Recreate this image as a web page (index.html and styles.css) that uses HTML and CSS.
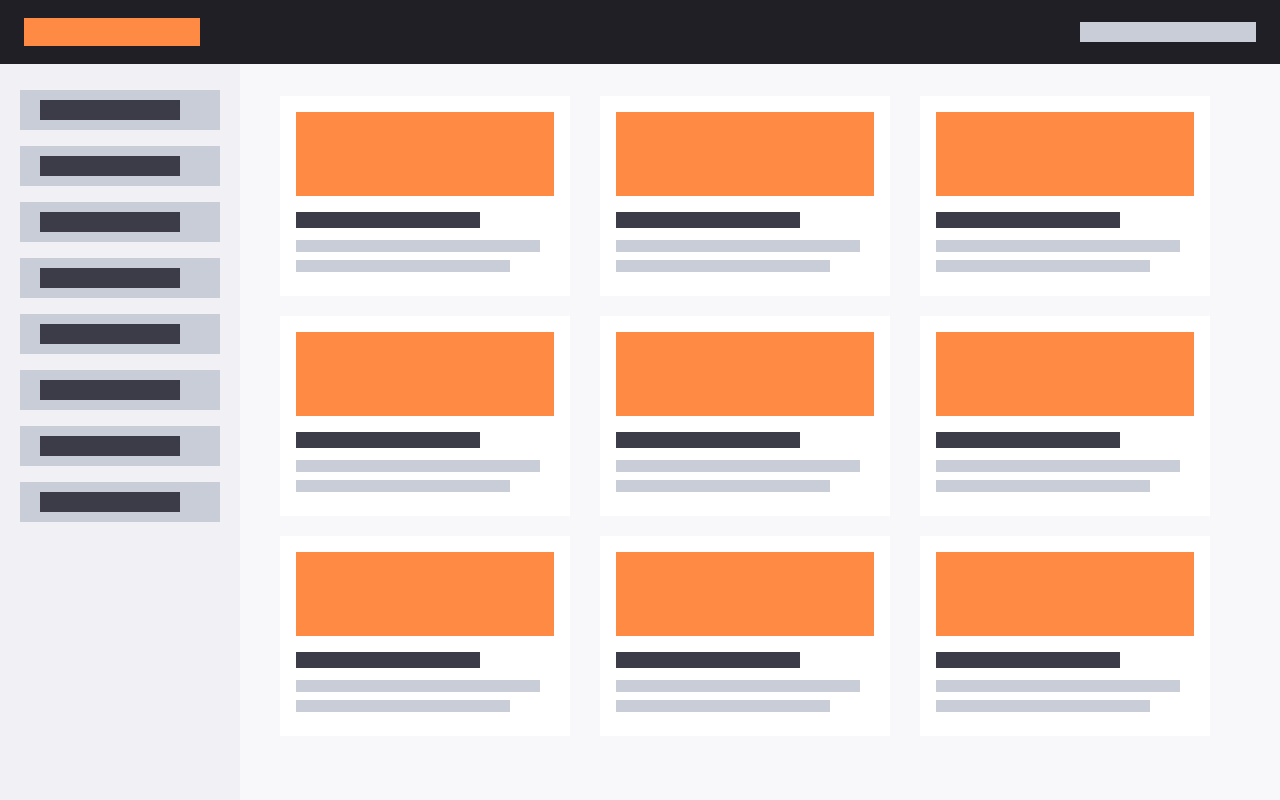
FILE: index.html
```html
<!DOCTYPE html>
<html>
<head>
<meta charset="utf-8">
<link rel="stylesheet" href="styles.css">
</head>
<body>
<header class="topbar">
  <div class="logo"></div>
  <div class="search"></div>
</header>
<div class="layout">
  <aside class="sidebar">
    <div class="nav-item"><div class="nav-label"></div></div>
    <div class="nav-item"><div class="nav-label"></div></div>
    <div class="nav-item"><div class="nav-label"></div></div>
    <div class="nav-item"><div class="nav-label"></div></div>
    <div class="nav-item"><div class="nav-label"></div></div>
    <div class="nav-item"><div class="nav-label"></div></div>
    <div class="nav-item"><div class="nav-label"></div></div>
    <div class="nav-item"><div class="nav-label"></div></div>
  </aside>
  <main class="content">
    <div class="grid">
      <div class="card"><div class="thumb"></div><div class="title"></div><div class="line l1"></div><div class="line l2"></div></div>
      <div class="card"><div class="thumb"></div><div class="title"></div><div class="line l1"></div><div class="line l2"></div></div>
      <div class="card"><div class="thumb"></div><div class="title"></div><div class="line l1"></div><div class="line l2"></div></div>
      <div class="card"><div class="thumb"></div><div class="title"></div><div class="line l1"></div><div class="line l2"></div></div>
      <div class="card"><div class="thumb"></div><div class="title"></div><div class="line l1"></div><div class="line l2"></div></div>
      <div class="card"><div class="thumb"></div><div class="title"></div><div class="line l1"></div><div class="line l2"></div></div>
      <div class="card"><div class="thumb"></div><div class="title"></div><div class="line l1"></div><div class="line l2"></div></div>
      <div class="card"><div class="thumb"></div><div class="title"></div><div class="line l1"></div><div class="line l2"></div></div>
      <div class="card"><div class="thumb"></div><div class="title"></div><div class="line l1"></div><div class="line l2"></div></div>
    </div>
  </main>
</div>
</body>
</html>
```
FILE: styles.css
```css
* { box-sizing: border-box; }
html, body { margin: 0; padding: 0; }
body {
  width: 1280px;
  height: 800px;
  overflow: hidden;
  font-family: "Liberation Sans", Arial, sans-serif;
  background: #f8f8fa;
}
.topbar {
  height: 64px;
  background: #1f1f25;
  display: flex;
  align-items: center;
  justify-content: space-between;
  padding: 0 24px;
}
.logo {
  width: 176px;
  height: 28px;
  background: #ff8a44;
}
.search {
  width: 176px;
  height: 20px;
  background: #c9cdd8;
}
.layout {
  display: flex;
  height: 736px;
}
.sidebar {
  width: 240px;
  flex-shrink: 0;
  background: #f0f0f5;
  padding: 26px 20px;
  display: flex;
  flex-direction: column;
  gap: 16px;
}
.nav-item {
  height: 40px;
  background: #c9cdd8;
  padding: 10px 20px;
}
.nav-label {
  width: 140px;
  height: 20px;
  background: #3c3c48;
}
.content {
  flex: 1;
  padding: 32px 40px;
}
.grid {
  display: grid;
  grid-template-columns: repeat(3, 290px);
  column-gap: 30px;
  row-gap: 20px;
}
.card {
  height: 200px;
  background: #ffffff;
  padding: 16px;
}
.thumb {
  height: 84px;
  background: #ff8a44;
}
.title {
  margin-top: 16px;
  width: 184px;
  height: 16px;
  background: #3c3c48;
}
.line {
  height: 12px;
  background: #c9cdd8;
}
.l1 { margin-top: 12px; width: 244px; }
.l2 { margin-top: 8px; width: 214px; }
```
